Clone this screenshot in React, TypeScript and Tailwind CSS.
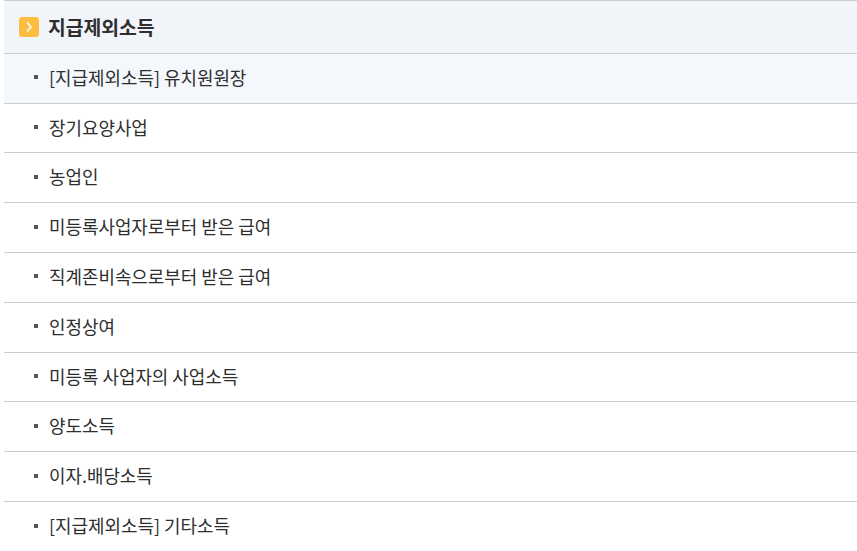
const items = [
  '[지급제외소득] 유치원원장',
  '장기요양사업',
  '농업인',
  '미등록사업자로부터 받은 급여',
  '직계존비속으로부터 받은 급여',
  '인정상여',
  '미등록 사업자의 사업소득',
  '양도소득',
  '이자.배당소득',
  '[지급제외소득] 기타소득',
];

export default function App() {
  return (
    <div className="h-[551px] w-[857px] overflow-hidden bg-white pl-1 font-['Noto_Sans_CJK_KR','Noto_Sans',sans-serif] text-[#2e2e2e]">
      <div className="flex h-[53.8px] items-center gap-[9px] border-y border-[#ccc] bg-[#f1f4f9] pl-[15px]">
        <span className="flex h-5 w-5 items-center justify-center rounded-[3px] bg-[#fdbd40]">
          <svg width="10" height="12" viewBox="0 0 10 12" fill="none" stroke="white" strokeWidth="1.6">
            <path d="M3 1.5l4 4.5L3 10.5" />
          </svg>
        </span>
        <h2 className="pt-[2px] text-[19.3px] font-bold">지급제외소득</h2>
      </div>
      <ul>
        {items.map((item, i) => (
          <li
            key={item}
            className={`flex h-[49.8px] items-center gap-[11px] border-b border-[#ccc] pb-[2px] pl-[30px] text-[17.92px] font-normal last:border-b-0 ${i === 0 ? 'bg-[#f4f7fc]' : ''}`}
          >
            <span className="h-1 w-1 shrink-0 bg-[#555]" />
            {item}
          </li>
        ))}
      </ul>
    </div>
  );
}
